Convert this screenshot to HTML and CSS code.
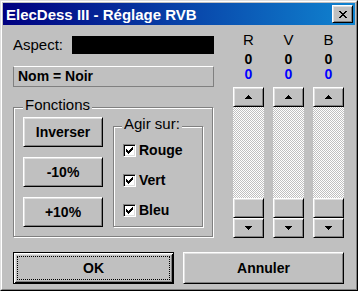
FILE: index.html
```html
<!DOCTYPE html>
<html lang="fr">

<head>
    <meta charset="UTF-8">
    <title>ElecDess III - Réglage RVB</title>
    <link rel="stylesheet" href="styles.css">
</head>

<body>
    <div class="window">
        <div class="frame">
            <div class="titlebar">
                <span class="title">ElecDess III - Réglage RVB</span>
                <button class="close" type="button">
                    <svg width="8" height="7" viewBox="0 0 8 7" shape-rendering="crispEdges"><path d="M0 0h2v1H0zM6 0h2v1H6zM1 1h2v1H1zM5 1h2v1H5zM2 2h4v1H2zM3 3h2v1H3zM2 4h4v1H2zM1 5h2v1H1zM5 5h2v1H5zM0 6h2v1H0zM6 6h2v1H6z" fill="#000"/></svg>
                </button>
            </div>

            <div class="content">
                <div class="top">
                    <div class="left">
                        <div class="aspect">
                            <span class="aspect-label">Aspect:</span>
                            <div class="swatch"></div>
                        </div>
                        <div class="name">Nom = Noir</div>

                        <div class="group fonctions">
                            <div class="legend">Fonctions</div>
                            <div class="group-body">
                                <div class="actions">
                                    <button class="btn" type="button">Inverser</button>
                                    <button class="btn" type="button">-10%</button>
                                    <button class="btn" type="button">+10%</button>
                                </div>
                                <div class="group agir">
                                    <div class="legend">Agir sur:</div>
                                    <div class="checks">
                                        <label class="check"><span class="box"><svg width="7" height="7" viewBox="0 0 7 7" shape-rendering="crispEdges"><path d="M6 0h1v1H6zM5 1h2v1H5zM0 2h1v1H0zM4 2h3v1H4zM0 3h2v1H0zM3 3h3v1H3zM0 4h5v1H0zM1 5h3v1H1zM2 6h1v1H2z" fill="#000"/></svg></span>Rouge</label>
                                        <label class="check"><span class="box"><svg width="7" height="7" viewBox="0 0 7 7" shape-rendering="crispEdges"><path d="M6 0h1v1H6zM5 1h2v1H5zM0 2h1v1H0zM4 2h3v1H4zM0 3h2v1H0zM3 3h3v1H3zM0 4h5v1H0zM1 5h3v1H1zM2 6h1v1H2z" fill="#000"/></svg></span>Vert</label>
                                        <label class="check"><span class="box"><svg width="7" height="7" viewBox="0 0 7 7" shape-rendering="crispEdges"><path d="M6 0h1v1H6zM5 1h2v1H5zM0 2h1v1H0zM4 2h3v1H4zM0 3h2v1H0zM3 3h3v1H3zM0 4h5v1H0zM1 5h3v1H1zM2 6h1v1H2z" fill="#000"/></svg></span>Bleu</label>
                                    </div>
                                </div>
                            </div>
                        </div>
                    </div>

                    <div class="channels">
                        <div class="channel">
                            <div class="ch-letter">R</div>
                            <div class="ch-value">0</div>
                            <div class="ch-input">0</div>
                            <div class="scroll">
                                <div class="sbtn"><svg width="7" height="4" viewBox="0 0 7 4" shape-rendering="crispEdges"><path d="M3 0h1v1h1v1h1v1h1v1H0V3h1V2h1V1h1z" fill="#000"/></svg></div>
                                <div class="track"></div>
                                <div class="sbtn"></div>
                                <div class="sbtn"><svg width="7" height="4" viewBox="0 0 7 4" shape-rendering="crispEdges"><path d="M0 0h7v1H6v1H5v1H4v1H3V3H2V2H1V1H0z" fill="#000"/></svg></div>
                            </div>
                        </div>
                        <div class="channel">
                            <div class="ch-letter">V</div>
                            <div class="ch-value">0</div>
                            <div class="ch-input">0</div>
                            <div class="scroll">
                                <div class="sbtn"><svg width="7" height="4" viewBox="0 0 7 4" shape-rendering="crispEdges"><path d="M3 0h1v1h1v1h1v1h1v1H0V3h1V2h1V1h1z" fill="#000"/></svg></div>
                                <div class="track"></div>
                                <div class="sbtn"></div>
                                <div class="sbtn"><svg width="7" height="4" viewBox="0 0 7 4" shape-rendering="crispEdges"><path d="M0 0h7v1H6v1H5v1H4v1H3V3H2V2H1V1H0z" fill="#000"/></svg></div>
                            </div>
                        </div>
                        <div class="channel">
                            <div class="ch-letter">B</div>
                            <div class="ch-value">0</div>
                            <div class="ch-input">0</div>
                            <div class="scroll">
                                <div class="sbtn"><svg width="7" height="4" viewBox="0 0 7 4" shape-rendering="crispEdges"><path d="M3 0h1v1h1v1h1v1h1v1H0V3h1V2h1V1h1z" fill="#000"/></svg></div>
                                <div class="track"></div>
                                <div class="sbtn"></div>
                                <div class="sbtn"><svg width="7" height="4" viewBox="0 0 7 4" shape-rendering="crispEdges"><path d="M0 0h7v1H6v1H5v1H4v1H3V3H2V2H1V1H0z" fill="#000"/></svg></div>
                            </div>
                        </div>
                    </div>
                </div>

                <div class="footer">
                    <button class="btn default" type="button"><span class="focus">OK</span></button>
                    <button class="btn" type="button">Annuler</button>
                </div>
            </div>
        </div>
    </div>
</body>

</html>
```

FILE: styles.css
```css
body {
    margin: 0;
    font-family: 'Liberation Sans', Arial, sans-serif;
    font-size: 15px;
    color: #000;
}

.window {
    width: 358px;
    height: 291px;
    box-sizing: border-box;
    border: 1px solid;
    border-color: #dfdfdf #000 #000 #dfdfdf;
    background: #c0c0c0;
}

.frame {
    height: 100%;
    box-sizing: border-box;
    border: 1px solid;
    border-color: #fff #808080 #808080 #fff;
    padding: 1px;
    display: flex;
    flex-direction: column;
}

.titlebar {
    height: 22px;
    display: flex;
    align-items: center;
    justify-content: space-between;
    padding: 0 2px 0 3px;
    background: linear-gradient(to right, #000080, #1084d0);
}

.title {
    color: #fff;
    font-weight: bold;
    font-size: 15px;
}

.close {
    width: 21px;
    height: 18px;
    padding: 0;
    display: flex;
    align-items: center;
    justify-content: center;
    background: #c0c0c0;
    border: 1px solid;
    border-color: #fff #000 #000 #fff;
    box-shadow: inset 1px 1px #dfdfdf, inset -1px -1px #808080;
}

.content {
    flex: 1;
    padding: 7px 10px 0 10px;
}

.top {
    display: flex;
    gap: 19px;
}

.left {
    width: 201px;
    margin-top: 4px;
}

.aspect {
    display: flex;
    height: 18px;
    line-height: 18px;
}

.aspect-label {
    width: 59px;
}

.swatch {
    flex: 1;
    background: #000;
}

.name {
    margin-top: 12px;
    height: 21px;
    box-sizing: border-box;
    border: 1px solid #808080;
    border-top-color: #fff;
    line-height: 19px;
    padding-left: 4px;
    font-size: 14px;
    font-weight: bold;
}

/* etched group frame */
.group {
    box-sizing: border-box;
    border: 1px solid #808080;
    box-shadow: 1px 1px 0 #fff, inset 1px 1px 0 #fff;
}

.legend {
    display: table;
    line-height: 16px;
    margin: -11px 0 0 9px;
    padding: 0 2px;
    background: #c0c0c0;
}

.fonctions {
    margin-top: 20px;
    width: 200px;
    height: 130px;
}

.group-body {
    display: flex;
    padding: 4px 0 0 9px;
}

.actions {
    display: flex;
    flex-direction: column;
    gap: 10px;
    width: 80px;
}

.actions .btn {
    height: 30px;
}

.agir {
    width: 90px;
    height: 101px;
    margin: 9px 0 0 10px;
}

.agir .legend {
    margin-left: 8px;
}

.checks {
    display: flex;
    flex-direction: column;
    gap: 14px;
    padding: 10px 0 0 9px;
}

.check {
    display: flex;
    align-items: center;
    gap: 3px;
    height: 16px;
    font-size: 14px;
    font-weight: bold;
}

.box {
    width: 13px;
    height: 13px;
    box-sizing: border-box;
    display: flex;
    align-items: center;
    justify-content: center;
    background: #fff;
    border: 1px solid;
    border-color: #808080 #fff #fff #808080;
    box-shadow: inset 1px 1px #000, inset -1px -1px #dfdfdf;
}

.btn {
    box-sizing: border-box;
    padding: 0;
    background: #c0c0c0;
    color: #000;
    font: bold 14px 'Liberation Sans', Arial, sans-serif;
    border: 1px solid;
    border-color: #fff #000 #000 #fff;
    box-shadow: inset 1px 1px #dfdfdf, inset -1px -1px #808080;
}

.channels {
    display: flex;
    gap: 9px;
}

.channel {
    width: 31px;
    display: flex;
    flex-direction: column;
    text-align: center;
}

.ch-letter {
    line-height: 16px;
}

.ch-value {
    margin-top: 4px;
    line-height: 15px;
    font-size: 14px;
    font-weight: bold;
}

.ch-input {
    line-height: 15px;
    font-size: 14px;
    font-weight: bold;
    color: #0000ff;
}

.scroll {
    margin-top: 5px;
    display: flex;
    flex-direction: column;
}

.sbtn {
    height: 20px;
    box-sizing: border-box;
    display: flex;
    align-items: center;
    justify-content: center;
    background: #c0c0c0;
    border: 1px solid;
    border-color: #fff #000 #000 #fff;
    box-shadow: inset 1px 1px #dfdfdf, inset -1px -1px #808080;
}

.track {
    height: 91px;
    background: repeating-conic-gradient(#fff 0 25%, #c0c0c0 0 50%) 0 0 / 2px 2px;
}

.footer {
    display: flex;
    gap: 9px;
    margin-top: 14px;
}

.footer .btn {
    width: 161px;
    height: 32px;
}

.btn.default {
    display: flex;
    padding: 3px;
    border: 1px solid #000;
    box-shadow: inset 1px 1px #fff, inset -1px -1px #000, inset 2px 2px #dfdfdf, inset -2px -2px #808080;
}

.focus {
    flex: 1;
    display: flex;
    align-items: center;
    justify-content: center;
    border: 1px dotted #000;
}
```
